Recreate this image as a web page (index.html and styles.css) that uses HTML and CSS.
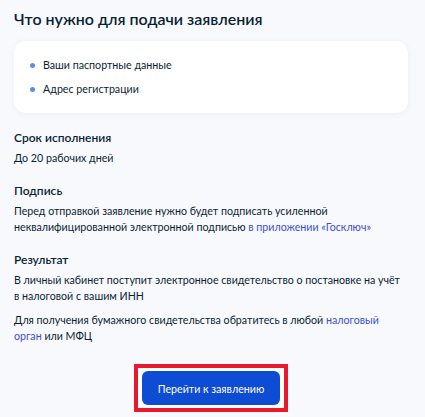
FILE: index.html
```html
<!DOCTYPE html>
<html lang="ru">
<head>
<meta charset="utf-8">
<link rel="stylesheet" href="styles.css">
</head>
<body>
<main class="page">
  <h1 class="title">Что нужно для подачи заявления</h1>
  <div class="card">
    <ul class="list">
      <li>Ваши паспортные данные</li>
      <li>Адрес регистрации</li>
    </ul>
  </div>
  <section class="block">
    <h2 class="label">Срок исполнения</h2>
    <p class="text">До 20 рабочих дней</p>
  </section>
  <section class="block">
    <h2 class="label">Подпись</h2>
    <p class="text">Перед отправкой заявление нужно будет подписать усиленной неквалифицированной электронной подписью <a class="link">в приложении «Госключ»</a></p>
  </section>
  <section class="block">
    <h2 class="label">Результат</h2>
    <p class="text">В личный кабинет поступит электронное свидетельство о постановке на учёт в налоговой с вашим ИНН</p>
    <p class="text gap">Для получения бумажного свидетельства обратитесь в любой <a class="link">налоговый орган</a> или МФЦ</p>
  </section>
  <div class="actions">
    <div class="highlight">
      <button class="btn">Перейти к заявлению</button>
    </div>
  </div>
</main>
</body>
</html>
```
FILE: styles.css
```css
* { box-sizing: border-box; }
html, body { margin: 0; padding: 0; }
body {
  background: #f8f9fd;
  font-family: Lato, "Noto Sans", sans-serif;
  color: #0b1f33;
  width: 425px;
  height: 417px;
  overflow: hidden;
}
.page {
  padding: 7px 17px 0 14px;
}
.title {
  margin: 0;
  font-size: 16px;
  line-height: 24px;
  font-weight: 600;
}
.card {
  margin-top: 10px;
  background: #fff;
  border-radius: 12px;
  box-shadow: 0 1px 6px rgba(100, 120, 180, 0.08);
  padding: 16px 17px 16px 17px;
}
.list {
  list-style: none;
  margin: 0;
  padding: 0;
  display: flex;
  flex-direction: column;
  gap: 8px;
}
.list li {
  position: relative;
  padding-left: 12px;
  font-size: 10.67px;
  line-height: 16px;
}
.list li::before {
  content: "";
  position: absolute;
  left: -1px;
  top: 6px;
  width: 5px;
  height: 5px;
  border-radius: 50%;
  background: #5b8def;
}
.block { margin-top: 17px; }
.label {
  margin: 0;
  font-size: 12px;
  line-height: 16px;
  font-weight: 600;
}
.text {
  margin: 4px 0 0;
  padding-right: 8px;
  font-size: 10.67px;
  line-height: 16px;
}
.text.gap { margin-top: 8px; }
.link { color: #3c4fcf; text-decoration: none; }
.actions {
  display: flex;
  justify-content: center;
  margin-top: 20px;
}
.highlight {
  border: 4px solid #e8192c;
  background: #fff;
  padding: 3px 4px;
  display: flex;
}
.btn {
  border: 0;
  background: #0d4cd3;
  color: #fff;
  font-family: Lato, "Noto Sans", sans-serif;
  font-size: 10.67px;
  width: 138px;
  height: 34px;
  border-radius: 6px;
  padding: 0;
}
```
